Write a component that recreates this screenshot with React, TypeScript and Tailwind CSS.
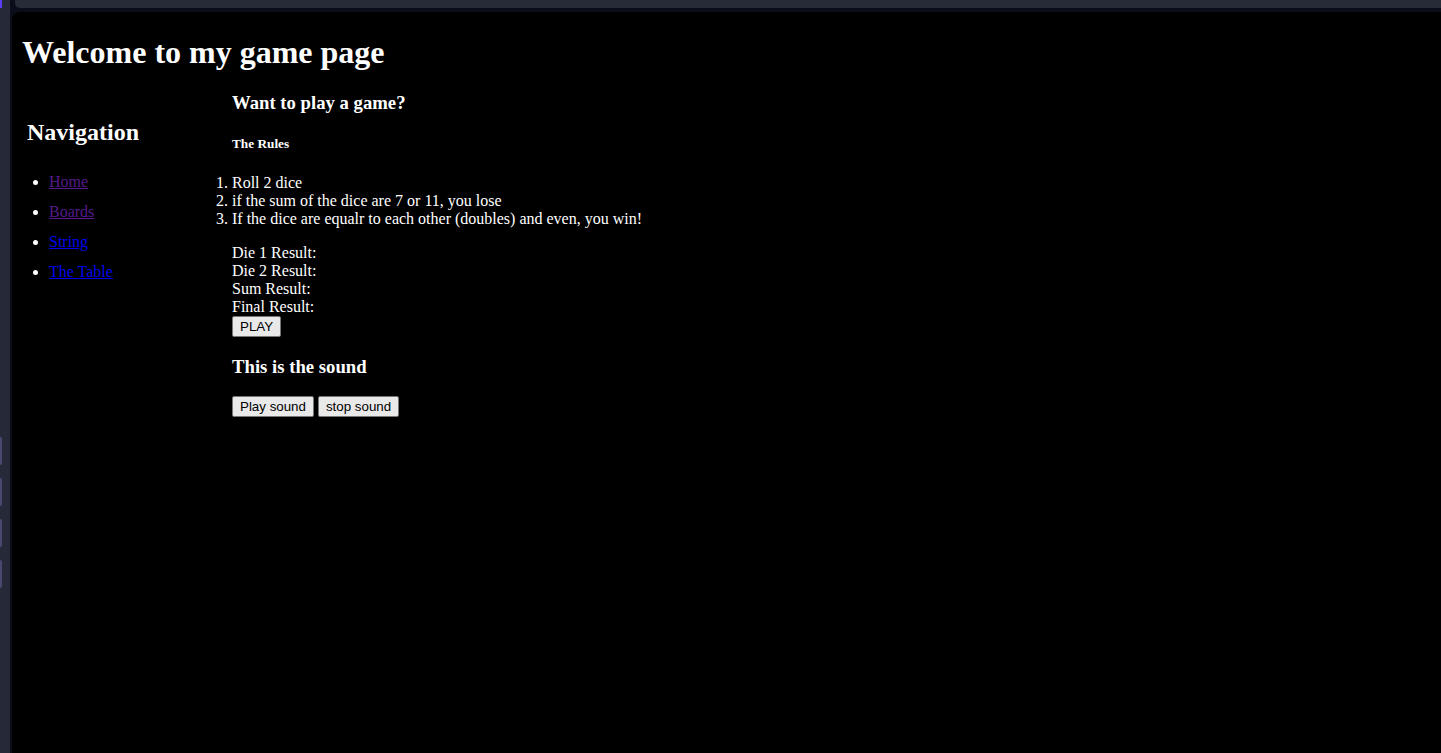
import React from "react";

const serif = { fontFamily: '"Liberation Serif", "Times New Roman", serif' };

function Btn({ children }: { children: React.ReactNode }) {
  return (
    <button
      className="bg-[#e9e9e9] text-black border border-[#767676] px-[7px] py-[2px] text-[13.33px] leading-[15px] rounded-[2px] align-bottom"
      style={{ fontFamily: '"Liberation Sans", Arial, sans-serif' }}
    >
      {children}
    </button>
  );
}

export default function App() {
  const navLinks = [
    { label: "Home", visited: true },
    { label: "Boards", visited: true },
    { label: "String", visited: false },
    { label: "The Table", visited: false },
  ];
  return (
    <div className="w-full h-[753px] flex bg-[#0b0d1a] overflow-hidden">
      {/* left browser strip */}
      <div className="w-[10px] h-full bg-[#262a38] flex flex-col shrink-0">
        <div className="w-[2px] h-[8px] bg-[#5b3cf0]" />
        <div className="h-[429px]" />
        <div className="flex flex-col gap-[13px]">
          <div className="w-[2px] h-[28px] bg-[#4a4870] rounded-r-[2px]" />
          <div className="w-[2px] h-[28px] bg-[#4a4870] rounded-r-[2px]" />
          <div className="w-[2px] h-[28px] bg-[#4a4870] rounded-r-[2px]" />
          <div className="w-[2px] h-[28px] bg-[#4a4870] rounded-r-[2px]" />
        </div>
      </div>
      <div className="flex-1 flex flex-col min-w-0">
        <div className="h-[12px] flex">
          <div className="w-[5px]" />
          <div className="flex-1 h-[8px] bg-[#272b38] rounded-bl-[5px]" />
        </div>
        <div className="flex-1 ml-[2px] bg-black rounded-tl-[8px] text-white pl-[10px] pt-[22px]" style={serif}>
          <h1 className="text-[32px] leading-[37px] font-bold m-0">Welcome to my game page</h1>
          <div className="flex mt-[21px]">
            <nav className="w-[210px] shrink-0 pl-[5px] pt-[26px]">
              <h2 className="text-[24px] leading-[28px] font-bold">Navigation</h2>
              <ul className="list-disc list-outside pl-[22px] mt-[21px] text-[16px]">
                {navLinks.map((l) => (
                  <li key={l.label} className="py-[6px] leading-[18px]">
                    <a
                      href="#"
                      className={
                        "underline " + (l.visited ? "text-[#551a8b]" : "text-[#0000ee]")
                      }
                    >
                      {l.label}
                    </a>
                  </li>
                ))}
              </ul>
            </nav>
            <main className="flex-1 text-[16px]">
              <h3 className="text-[18.72px] leading-[21.5px] font-bold">Want to play a game?</h3>
              <h5 className="text-[13.28px] leading-[15px] font-bold mt-[22px]">The Rules</h5>
              <ol className="list-decimal list-outside pl-0 mt-[23.5px] leading-[18px]">
                <li>Roll 2 dice</li>
                <li>if the sum of the dice are 7 or 11, you lose</li>
                <li>If the dice are equalr to each other (doubles) and even, you win!</li>
              </ol>
              <div className="mt-[16px] leading-[18px]">
                <div>Die 1 Result:</div>
                <div>Die 2 Result:</div>
                <div>Sum Result:</div>
                <div>Final Result:</div>
                <div className="flex">
                  <Btn>PLAY</Btn>
                </div>
              </div>
              <h3 className="text-[18.72px] leading-[21.5px] font-bold mt-[19px]">This is the sound</h3>
              <div className="flex gap-[4px] mt-[18.5px]">
                <Btn>Play sound</Btn>
                <Btn>stop sound</Btn>
              </div>
            </main>
          </div>
        </div>
      </div>
    </div>
  );
}
